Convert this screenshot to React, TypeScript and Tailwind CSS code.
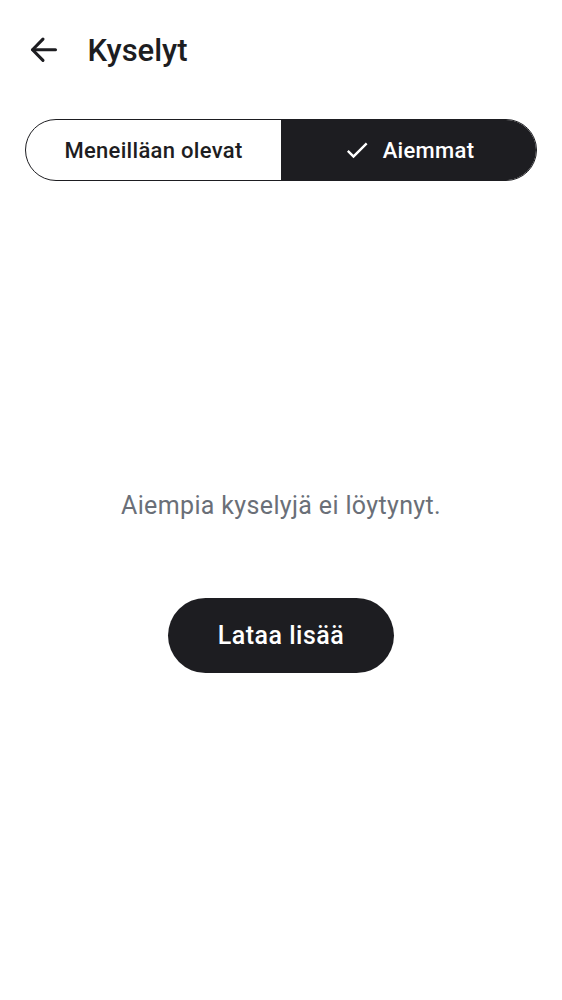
import React from "react";

export default function App() {
  return (
    <div className="w-[562px] h-[1000px] bg-white flex flex-col" style={{ fontFamily: "Roboto, 'Noto Sans', sans-serif" }}>
      <header className="h-[100px] flex items-center pl-[25px]">
        <svg width="37.5" height="37.5" viewBox="0 0 24 24" fill="none" stroke="#1d1d21" strokeWidth="2" strokeLinecap="round" strokeLinejoin="round">
          <path d="M19.5 12H5" />
          <path d="M11.5 5.2 4.8 12l6.7 6.8" />
        </svg>
        <h1 className="ml-[25px] text-[31px] font-medium text-[#1d1d21] leading-none">Kyselyt</h1>
      </header>
      <div className="mx-[25px] mt-[19px] h-[62px] flex rounded-full border border-[#1d1d21] overflow-hidden">
        <div className="flex-1 flex items-center justify-center text-[22px] font-medium text-[#1d1d21] tracking-[0.3px]">
          Meneilläan olevat
        </div>
        <div className="flex-1 flex items-center justify-center bg-[#1d1d21] text-white text-[22px] font-medium tracking-[0.3px]">
          <svg width="28" height="28" viewBox="0 0 24 24" className="mr-[12px]">
            <path fill="currentColor" d="M9 16.17L4.83 12l-1.42 1.41L9 19 21 7l-1.41-1.41z" />
          </svg>
          Aiemmat
        </div>
      </div>
      <p className="mt-[309px] text-center text-[25px] leading-[32px] text-[#6a6f78] tracking-[0.35px]">
        Aiempia kyselyjä ei löytynyt.
      </p>
      <div className="flex justify-center mt-[76px]">
        <button className="w-[226px] h-[75px] rounded-full bg-[#1d1d21] text-white text-[25px] font-medium tracking-[0.5px]">
          Lataa lisää
        </button>
      </div>
    </div>
  );
}
